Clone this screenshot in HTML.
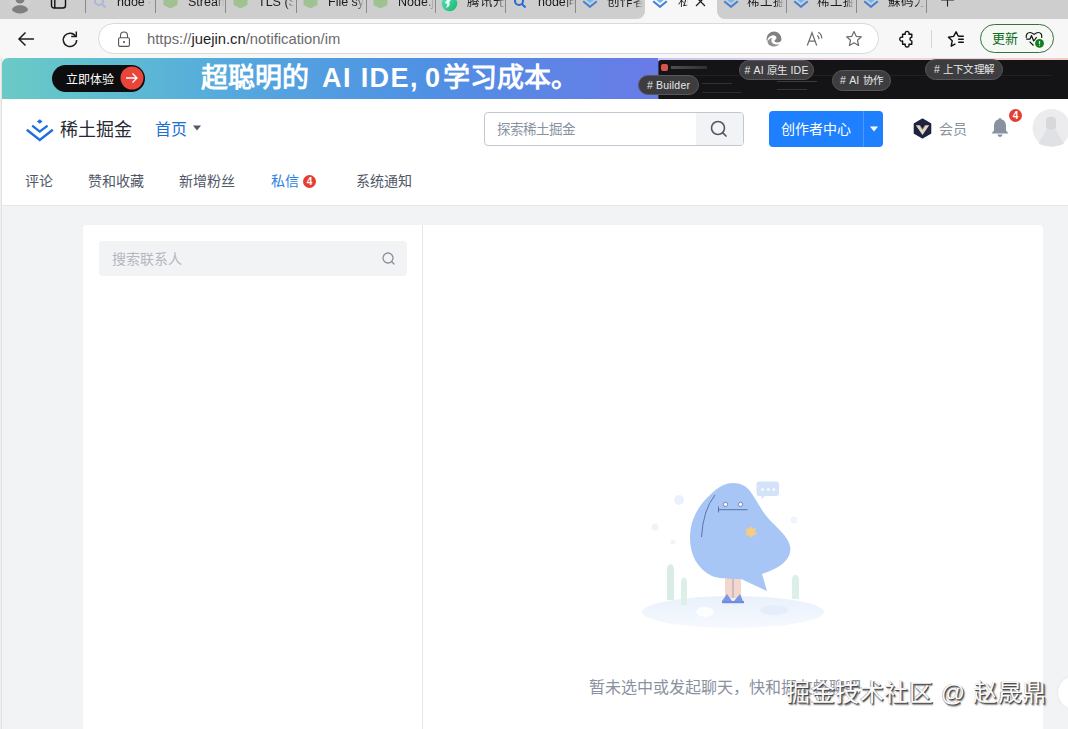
<!DOCTYPE html>
<html lang="zh-CN"><head><meta charset="utf-8">
<style>
*{box-sizing:border-box;margin:0;padding:0}
html,body{width:1068px;height:729px;overflow:hidden;background:#f2f3f5;font-family:"Liberation Sans",sans-serif}
.a{position:absolute}
#tabbar{left:0;top:0;width:1068px;height:19px;background:#f7f7f7;overflow:hidden}
.tt{position:absolute;top:-5px;font-size:12.5px;color:#1a1a1a;white-space:nowrap;overflow:hidden;line-height:14px;font-weight:500;-webkit-mask-image:linear-gradient(90deg,#000 78%,transparent 100%)}
.sep{position:absolute;top:0;width:1px;height:13px;background:#8a8a8a}
#toolbar{left:0;top:19px;width:1068px;height:39px;background:#f7f7f7}
#addr{left:98px;top:23px;width:781px;height:31px;border:1px solid #d9d9d9;border-radius:16px;background:#fff}
#banner{left:2px;top:58px;width:1066px;height:41px;border-radius:6px 0 0 0;overflow:hidden;background:linear-gradient(90deg,#6bcac5 0%,#60c0cf 8%,#55a8de 22%,#4f90e4 40%,#6a7ae7 62%)}
.bt{position:absolute;top:4px;font-size:27px;line-height:32px;color:#fff;white-space:nowrap;font-weight:bold}
.pill{position:absolute;background:#3d3d40;border:1px solid #58585c;border-radius:11px;color:#e8e8e8;font-size:10.5px;line-height:18px;text-align:center;white-space:nowrap;letter-spacing:0.2px}
#hdr{left:0;top:99px;width:1068px;height:106px;background:#fff}
.sn{position:absolute;top:173px;font-size:14px;line-height:16px;color:#515767;white-space:nowrap}
#gray{left:0;top:205px;width:1068px;height:524px;background:#f2f3f5;border-top:1px solid #e6e8eb}
#panel{left:83px;top:225px;width:960px;height:520px;background:#fff;border-radius:4px}
</style></head><body>
<div id="tabbar" class="a"><div class="a" style="left:0;top:0;width:645px;height:19px;background:#cecece;border-bottom-right-radius:8px"></div><div class="a" style="left:717px;top:0;width:351px;height:19px;background:#cecece;border-bottom-left-radius:8px"></div>
  <!-- profile -->
  <svg class="a" style="left:8px;top:-8px" width="24" height="24" viewBox="0 0 24 24"><circle cx="12" cy="8" r="11" fill="#d2d2d2"/><circle cx="12" cy="7" r="4.5" fill="#7f7f7f"/><path d="M4 18 C4.5 11.5 19.5 11.5 20 18 C17.5 22.5 6.5 22.5 4 18Z" fill="#7f7f7f"/></svg>
  <!-- tab actions -->
  <svg class="a" style="left:50px;top:-8px" width="18" height="18" viewBox="0 0 18 18"><rect x="1.5" y="1.5" width="14" height="14.5" rx="2.5" fill="none" stroke="#111" stroke-width="1.4"/><line x1="4.8" y1="2" x2="4.8" y2="16" stroke="#111" stroke-width="1.4"/></svg>
  <div class="sep" style="left:85px"></div>
  <svg class="a" style="left:93px;top:-5px" width="14" height="14" viewBox="0 0 14 14"><circle cx="6" cy="6" r="4" fill="none" stroke="#a9b8d6" stroke-width="2"/><line x1="9" y1="9" x2="12.5" y2="12.5" stroke="#a9b8d6" stroke-width="2"/></svg>
  <div class="tt" style="left:117px;width:34px">hdoe -</div>
  <div class="sep" style="left:155px"></div>
  <svg class="a hex" style="left:163px;top:-6px" width="15" height="15" viewBox="0 0 15 15"><path d="M7.5 0 L14.5 3.5 V11 L7.5 14.5 L0.5 11 V3.5Z" fill="#a0c293"/></svg>
  <div class="tt" style="left:188px;width:36px">Stream</div>
  <div class="sep" style="left:225px"></div>
  <svg class="a hex" style="left:233px;top:-6px" width="15" height="15" viewBox="0 0 15 15"><path d="M7.5 0 L14.5 3.5 V11 L7.5 14.5 L0.5 11 V3.5Z" fill="#a0c293"/></svg>
  <div class="tt" style="left:258px;width:36px">TLS (SS</div>
  <div class="sep" style="left:296px"></div>
  <svg class="a hex" style="left:303px;top:-6px" width="15" height="15" viewBox="0 0 15 15"><path d="M7.5 0 L14.5 3.5 V11 L7.5 14.5 L0.5 11 V3.5Z" fill="#a0c293"/></svg>
  <div class="tt" style="left:328px;width:36px">File sys</div>
  <div class="sep" style="left:366px"></div>
  <svg class="a hex" style="left:373px;top:-6px" width="15" height="15" viewBox="0 0 15 15"><path d="M7.5 0 L14.5 3.5 V11 L7.5 14.5 L0.5 11 V3.5Z" fill="#a0c293"/></svg>
  <div class="tt" style="left:398px;width:36px">Node.js</div>
  <div class="sep" style="left:435px"></div>
  <svg class="a" style="left:441px;top:-5px" width="17" height="17" viewBox="0 0 17 17"><defs><linearGradient id="ty" x1="0" y1="0" x2="1" y2="1"><stop offset="0" stop-color="#5de0c0"/><stop offset="1" stop-color="#14b86a"/></linearGradient></defs><circle cx="8.5" cy="8.5" r="7.8" fill="url(#ty)"/><path d="M4 8 C5 4.5 9 3 12.5 4.5 C10 4.5 8 6 8.5 8.5 C9 11 7 13 4.5 12.5 C6 11.5 6.5 10 6 9 C5.5 8.5 4.5 8.3 4 8Z" fill="#e9fff5"/></svg>
  <div class="tt" style="left:467px;width:38px">腾讯元宝</div>
  <div class="sep" style="left:505px"></div>
  <svg class="a" style="left:513px;top:-5px" width="14" height="14" viewBox="0 0 14 14"><circle cx="6" cy="6" r="4" fill="none" stroke="#2b6bd0" stroke-width="2"/><line x1="9" y1="9" x2="12.5" y2="12.5" stroke="#2b6bd0" stroke-width="2"/></svg>
  <div class="tt" style="left:538px;width:37px">node向</div>
  <div class="sep" style="left:575px"></div>
  <svg class="a jj" style="left:582px;top:-8px" width="16" height="16" viewBox="0 0 16 16"><path d="M8 1.5 L10.3 3.5 L8 5.5 L5.7 3.5Z" fill="#5aa8f0"/><path d="M4 6.5 L8 9.8 L12 6.5" fill="none" stroke="#6cb8f5" stroke-width="2"/><path d="M1.2 9.3 L8 14.8 L14.8 9.3" fill="none" stroke="#4a80d4" stroke-width="2.1"/></svg>
  <div class="tt" style="left:607px;width:36px">创作者</div>
  <!-- active tab -->
  
  <svg class="a jj" style="left:652px;top:-8px" width="16" height="16" viewBox="0 0 16 16"><path d="M8 1.5 L10.3 3.5 L8 5.5 L5.7 3.5Z" fill="#5aa8f0"/><path d="M4 6.5 L8 9.8 L12 6.5" fill="none" stroke="#6cb8f5" stroke-width="2"/><path d="M1.2 9.3 L8 14.8 L14.8 9.3" fill="none" stroke="#4a80d4" stroke-width="2.1"/></svg>
  <div class="tt" style="left:678px;width:10px">私信</div>
  <svg class="a" style="left:695px;top:-4px" width="11" height="11" viewBox="0 0 11 11"><path d="M1 1 L10 10 M10 1 L1 10" stroke="#222" stroke-width="1.3"/></svg>
  <svg class="a jj" style="left:723px;top:-8px" width="16" height="16" viewBox="0 0 16 16"><path d="M8 1.5 L10.3 3.5 L8 5.5 L5.7 3.5Z" fill="#5aa8f0"/><path d="M4 6.5 L8 9.8 L12 6.5" fill="none" stroke="#6cb8f5" stroke-width="2"/><path d="M1.2 9.3 L8 14.8 L14.8 9.3" fill="none" stroke="#4a80d4" stroke-width="2.1"/></svg>
  <div class="tt" style="left:747px;width:37px">稀土掘金</div>
  <div class="sep" style="left:786px"></div>
  <svg class="a jj" style="left:793px;top:-8px" width="16" height="16" viewBox="0 0 16 16"><path d="M8 1.5 L10.3 3.5 L8 5.5 L5.7 3.5Z" fill="#5aa8f0"/><path d="M4 6.5 L8 9.8 L12 6.5" fill="none" stroke="#6cb8f5" stroke-width="2"/><path d="M1.2 9.3 L8 14.8 L14.8 9.3" fill="none" stroke="#4a80d4" stroke-width="2.1"/></svg>
  <div class="tt" style="left:817px;width:37px">稀土掘金</div>
  <div class="sep" style="left:856px"></div>
  <svg class="a jj" style="left:863px;top:-8px" width="16" height="16" viewBox="0 0 16 16"><path d="M8 1.5 L10.3 3.5 L8 5.5 L5.7 3.5Z" fill="#5aa8f0"/><path d="M4 6.5 L8 9.8 L12 6.5" fill="none" stroke="#6cb8f5" stroke-width="2"/><path d="M1.2 9.3 L8 14.8 L14.8 9.3" fill="none" stroke="#4a80d4" stroke-width="2.1"/></svg>
  <div class="tt" style="left:888px;width:36px">蘇码力</div>
  <div class="sep" style="left:926px"></div>
  <svg class="a" style="left:941px;top:-7px" width="14" height="14" viewBox="0 0 14 14"><path d="M6.5 0 V13.5 M0 7 H13" stroke="#222" stroke-width="1.1"/></svg>
</div>
<div id="toolbar" class="a"></div>
<!-- back -->
<svg class="a" style="left:16px;top:30px" width="20" height="18" viewBox="0 0 20 18"><path d="M18 9 H3 M9.5 2.5 L3 9 L9.5 15.5" fill="none" stroke="#1f1f1f" stroke-width="1.5"/></svg>
<!-- refresh -->
<svg class="a" style="left:60px;top:29px" width="20" height="20" viewBox="0 0 20 20"><path d="M15.8 7.5 A6.7 6.7 0 1 0 16.7 11" fill="none" stroke="#1f1f1f" stroke-width="1.5"/><path d="M16.3 2.5 V7.6 H11.2" fill="none" stroke="#1f1f1f" stroke-width="1.5"/></svg>
<div id="addr" class="a"></div>
<!-- lock -->
<svg class="a" style="left:116px;top:30px" width="16" height="18" viewBox="0 0 16 18"><path d="M4.5 8 V5.5 A3.5 3.5 0 0 1 11.5 5.5 V8" fill="none" stroke="#555" stroke-width="1.1"/><rect x="2.6" y="7.8" width="10.8" height="8.6" rx="1.3" fill="none" stroke="#555" stroke-width="1.1"/><circle cx="8" cy="12" r="1" fill="#444"/></svg>
<div class="a" style="left:147px;top:31px;font-size:14.8px;line-height:17px;color:#6b6b6b;white-space:nowrap;letter-spacing:0px">https://<span style="color:#1f1f1f">juejin.cn</span>/notification/im</div>
<!-- edge logo -->
<svg class="a" style="left:766px;top:31px" width="16" height="16" viewBox="0 0 16 16"><path d="M8 0.5 A7.5 7.5 0 0 1 15.5 8 C15.5 10.5 13.5 11.5 11.5 11.5 C9.5 11.5 8.5 10.5 8.5 9.5 C8.5 8.5 10.5 8.5 10.5 7 C10.5 5 8 4 6 4.5 C3 5.3 1 8 1.5 11 C0.8 9.5 0.5 8.8 0.5 8 A7.5 7.5 0 0 1 8 0.5Z" fill="#808080"/><path d="M1.5 11 C2 14 5 15.5 8 15.5 C10.5 15.5 12.5 14.5 13.5 13 C11 14 8 13.5 6.5 12 C5 10.5 5 8 6.5 7 C4 7 2 9 1.5 11Z" fill="#909090"/></svg>
<!-- read aloud -->
<svg class="a" style="left:805px;top:30px" width="20" height="17" viewBox="0 0 20 17"><path d="M2.3 15.5 L7 2.8 L11.7 15.5 M3.9 11.2 H10.1" fill="none" stroke="#6a6a6a" stroke-width="1.2"/><path d="M12.3 5.6 C13.5 6.5 14 7.6 14 9.2" fill="none" stroke="#6a6a6a" stroke-width="1.2"/><path d="M13.3 2.2 C15.8 3.5 16.8 5.5 16.8 8.6" fill="none" stroke="#6a6a6a" stroke-width="1.2"/></svg>
<!-- star -->
<svg class="a" style="left:845px;top:30px" width="18" height="18" viewBox="0 0 18 18"><path d="M9 1.5 L11.2 6.3 L16.4 6.8 L12.5 10.3 L13.6 15.5 L9 12.8 L4.4 15.5 L5.5 10.3 L1.6 6.8 L6.8 6.3Z" fill="none" stroke="#6a6a6a" stroke-width="1.2" stroke-linejoin="round"/></svg>
<!-- puzzle -->
<svg class="a" style="left:899px;top:30px" width="17" height="18" viewBox="0 0 17 18"><path d="M3.6 4.2 H6.3 A2 2 0 1 1 9.9 4.2 H12.8 V7.3 A1.8 1.8 0 1 0 12.8 10.9 V14.2 H9.9 A2 2 0 1 1 6.3 14.2 H3.6 V10.9 A2 2 0 1 1 3.6 7.3 Z" fill="none" stroke="#111" stroke-width="1.4" stroke-linejoin="round"/></svg>
<div class="a" style="left:931px;top:30px;width:1px;height:18px;background:#d4d4d4"></div>
<!-- favorites -->
<svg class="a" style="left:946px;top:30px" width="20" height="18" viewBox="0 0 20 18"><path d="M12.2 6.1 L10.1 1.8 L7.6 6.4 L2.4 7.2 L6.2 10.8 L5.2 16.2 L9.4 13.9" fill="none" stroke="#111" stroke-width="1.4" stroke-linejoin="round"/><path d="M12.2 6.3 H17.8 M12.2 9.3 H17.8 M12.2 12.3 H17.8" stroke="#111" stroke-width="1.4"/></svg>
<!-- update pill -->
<div class="a" style="left:980px;top:24px;width:74px;height:29px;border:1px solid #3b6e41;border-radius:15px;background:#f5f9f4"></div>
<div class="a" style="left:992px;top:31px;font-size:13px;line-height:15px;color:#0e6b1e;white-space:nowrap">更新</div>
<svg class="a" style="left:1025px;top:31px" width="20" height="18" viewBox="0 0 20 18"><path d="M1.3 6.8 C0.8 3.5 2.5 1.5 5 1.5 C6.8 1.5 8 2.5 9.1 3.4 C10.2 2.5 11.4 1.5 13.2 1.5 C15.7 1.5 17.4 3.5 16.6 6.8" fill="none" stroke="#111" stroke-width="1.2"/><path d="M1.2 8.1 H5 L6.5 4.6 L8.7 10 L11.7 6.2" fill="none" stroke="#111" stroke-width="1.2" stroke-linejoin="round"/><path d="M4.6 10.6 L8.5 14.5" stroke="#111" stroke-width="1.2"/><circle cx="14.5" cy="12.4" r="4.4" fill="#137a1f"/><path d="M14.5 10 V13.2 M14.5 14.3 V15.1" stroke="#bff5c0" stroke-width="1.3"/></svg>
<div id="banner" class="a">
  <div class="a" style="left:656px;top:0;width:410px;height:3px;background:linear-gradient(90deg,#c9c4f0,#f2d6dc 60%,#f6c9c9)"></div>
  <div class="a" style="left:656px;top:2px;width:410px;height:39px;background:#141417;border-radius:3px 0 0 0;border-left:1px solid #3a3f6a"></div>
  <div class="a" style="left:659px;top:6px;width:7px;height:7px;background:#d9534f;border-radius:2px"></div>
  <div class="a" style="left:669px;top:8px;width:36px;height:3px;background:linear-gradient(90deg,#8a8a95 0,#4a4a52 100%);opacity:.5"></div>
  <div class="a" style="left:660px;top:17px;width:390px;height:1px;background:#202024"></div>
  <div class="a" style="left:775px;top:23px;width:40px;height:1px;background:#3a3a40"></div>
  <div class="a" style="left:775px;top:31px;width:30px;height:1px;background:#333338"></div>
  <div class="a" style="left:700px;top:25px;width:30px;height:1px;background:#333338"></div>
  <div class="a" style="left:700px;top:34px;width:40px;height:1px;background:#2c2c32"></div>
  <!-- CTA -->
  <div class="a" style="left:50px;top:7px;width:93px;height:27px;background:#0d0d10;border-radius:13.5px"></div>
  <div class="a" style="left:64px;top:15px;font-size:12px;line-height:14px;color:#fff;white-space:nowrap;font-weight:500">立即体验</div>
  <svg class="a" style="left:118px;top:8px" width="24" height="24" viewBox="0 0 24 24"><circle cx="12" cy="12" r="11.5" fill="#e9453a"/><path d="M6 12 H17 M12.5 7.5 L17 12 L12.5 16.5" fill="none" stroke="#fff" stroke-width="1.3"/></svg>
  <div class="bt" style="left:199px">超聪明的</div>
  <div class="bt" id="bt2" style="left:320px;letter-spacing:1.4px">AI IDE,</div>
  <div class="bt" style="left:423px"><span style="letter-spacing:3px">0</span>学习成本。</div>
  <!-- pills -->
  <div class="pill" style="left:636px;top:17px;width:61px;height:20px">#&nbsp;Builder</div>
  <div class="pill" style="left:737px;top:2px;width:75px;height:20px">#&nbsp;AI 原生 IDE</div>
  <div class="pill" style="left:830px;top:12px;width:59px;height:21px">#&nbsp;AI 协作</div>
  <div class="pill" style="left:923px;top:1px;width:78px;height:21px">#&nbsp;上下文理解</div>
</div>
<div id="hdr" class="a"></div>
<svg class="a" style="left:26px;top:118px" width="28" height="24" viewBox="0 0 28 24"><path d="M13.75 1.3 L16.6 3.5 L13.75 5.7 L10.9 3.5Z" fill="#1e6fe0"/><path d="M6.2 7.6 L13.75 13.6 L21.6 7.6" fill="none" stroke="#1e6fe0" stroke-width="2.4"/><path d="M0.8 11.8 L13.75 22 L26.8 11.8" fill="none" stroke="#1e6fe0" stroke-width="2.4"/></svg>
<div class="a" style="left:60px;top:120px;font-size:18px;line-height:21px;color:#252933;white-space:nowrap;font-weight:500">稀土掘金</div>
<div class="a" style="left:155px;top:121px;font-size:16px;line-height:18px;color:#1e6fd0;white-space:nowrap">首页</div>
<svg class="a" style="left:192px;top:125px" width="10" height="6" viewBox="0 0 10 6"><path d="M1 0.5 H9 L5 5.5Z" fill="#515767"/></svg>
<!-- search -->
<div class="a" style="left:484px;top:112px;width:260px;height:34px;border:1px solid #c2c8d1;border-radius:4px;background:#fff;overflow:hidden"><div class="a" style="right:0;top:0;width:47px;height:32px;background:#f2f3f5"></div></div>
<div class="a" style="left:497px;top:122px;font-size:13.5px;line-height:16px;color:#8a919f;white-space:nowrap">探索稀土掘金</div>
<svg class="a" style="left:709px;top:119px" width="20" height="20" viewBox="0 0 20 20"><circle cx="9" cy="9" r="6.5" fill="none" stroke="#515767" stroke-width="1.6"/><line x1="13.8" y1="13.8" x2="17" y2="17" stroke="#515767" stroke-width="1.7" stroke-linecap="round"/></svg>
<!-- creator btn -->
<div class="a" style="left:769px;top:111px;width:114px;height:36px;background:#1e80ff;border-radius:4px"></div>
<div class="a" style="left:863px;top:111px;width:1px;height:36px;background:#4d98f5"></div>
<div class="a" style="left:781px;top:121px;font-size:14px;line-height:16px;color:#fff;white-space:nowrap">创作者中心</div>
<svg class="a" style="left:869px;top:126px" width="10" height="6" viewBox="0 0 10 6"><path d="M1 0.5 H9 L5 5.5Z" fill="#fff"/></svg>
<!-- vip -->
<svg class="a" style="left:912px;top:118px" width="21" height="21" viewBox="0 0 21 21"><path d="M10.5 1.2 L18.6 5.8 V15.2 L10.5 19.8 L2.4 15.2 V5.8Z" fill="#1e2340" stroke="#1e2340" stroke-width="1.4" stroke-linejoin="round"/><path d="M3.8 7.2 L10.5 17 L17.2 7.2 H13.6 L10.5 11.8 L7.4 7.2Z" fill="#e3d8c2"/><path d="M7.6 7.2 L10.5 11.6 L13.4 7.2" fill="none" stroke="#b8a98c" stroke-width="0.8"/></svg>
<div class="a" style="left:939px;top:121px;font-size:14px;line-height:16px;color:#8a919f;white-space:nowrap">会员</div>
<!-- bell -->
<svg class="a" style="left:990px;top:117px" width="20" height="21" viewBox="0 0 20 21"><path d="M10 1 C10.8 1 11.3 1.6 11.3 2.3 C14.3 3 16 5.5 16 8.8 V13.5 L18.5 16.5 H1.5 L4 13.5 V8.8 C4 5.5 5.7 3 8.7 2.3 C8.7 1.6 9.2 1 10 1Z" fill="#8a919f"/><path d="M7.5 17.5 H12.5 C12.5 19 11.3 20 10 20 C8.7 20 7.5 19 7.5 17.5Z" fill="#8a919f"/></svg>
<div class="a" style="left:1009px;top:109px;width:13px;height:13px;border-radius:50%;background:#e33e33;color:#fff;font-size:10px;font-weight:bold;line-height:13px;text-align:center;border:0">4</div>
<!-- avatar -->
<svg class="a" style="left:1032px;top:109px" width="38" height="38" viewBox="0 0 38 38"><circle cx="19.5" cy="19" r="19" fill="#ececef"/><path d="M14 12 C14 8.5 16 7.8 19 7.8 C22 7.8 24 8.5 24 12 V18 C24 20 22 21 19 21 C16 21 14 20 14 18Z" fill="#d6d8dc"/><path d="M14.5 20.5 L6.5 34.5 C12 38 27 38 32 34.5 L23.5 20.5 C22 22 16 22 14.5 20.5Z" fill="#dfe1e4"/></svg>
<!-- subnav -->
<div class="sn" style="left:25px">评论</div>
<div class="sn" style="left:88px">赞和收藏</div>
<div class="sn" style="left:179px">新增粉丝</div>
<div class="sn" style="left:271px;color:#2a7fe2">私信</div>
<div class="a" style="left:303px;top:175px;width:13px;height:13px;border-radius:50%;background:#e33e33;color:#fff;font-size:10px;font-weight:bold;line-height:13px;text-align:center">4</div>
<div class="sn" style="left:356px">系统通知</div>
<div id="gray" class="a"></div>
<div id="panel" class="a"></div>
<div class="a" style="left:422px;top:225px;width:1px;height:504px;background:#e4e6eb"></div>
<div class="a" style="left:99px;top:241px;width:308px;height:35px;background:#f2f3f5;border-radius:4px"></div>
<div class="a" style="left:112px;top:251px;font-size:14px;line-height:16px;color:#b3b7bf;white-space:nowrap">搜索联系人</div>
<svg class="a" style="left:381px;top:251px" width="15" height="15" viewBox="0 0 15 15"><circle cx="7" cy="7" r="5" fill="none" stroke="#8a919f" stroke-width="1.3"/><line x1="10.6" y1="10.6" x2="13" y2="13" stroke="#8a919f" stroke-width="1.4" stroke-linecap="round"/></svg>
<!-- illustration -->
<svg class="a" style="left:630px;top:470px" width="210" height="170" viewBox="0 0 210 170">
  <defs><linearGradient id="gg" x1="0" y1="0" x2="0" y2="1"><stop offset="0" stop-color="#e9f1fc"/><stop offset="1" stop-color="#f6f9fe"/></linearGradient></defs><ellipse cx="103" cy="142" rx="91" ry="16" fill="url(#gg)"/>
  <ellipse cx="75" cy="142" rx="9" ry="5" fill="#fbfdff"/>
  <ellipse cx="144" cy="140" rx="14" ry="5" fill="#e4edfa"/>
  <circle cx="49" cy="30" r="5" fill="#eaf1fb"/>
  <circle cx="25" cy="57" r="3.5" fill="#eef4fb"/>
  <circle cx="43" cy="72" r="2.5" fill="#eef4fb"/>
  <circle cx="164" cy="50" r="3.5" fill="#eef4fb"/>
  <path d="M37 130 V100 C37 92 44 92 44 100 V130Z" fill="#d9ede6"/>
  <path d="M51 135 V112 C51 106 57 106 57 112 V135Z" fill="#dcefe8"/>
  <path d="M162 129 V110 C162 103 169 103 169 110 V129Z" fill="#dcefe8"/>
  <path d="M95 104 H111 V128 H95Z" fill="#f5d6cc"/>
  <line x1="103" y1="106" x2="103" y2="128" stroke="#6d7ab8" stroke-width="0.6"/>
  <path d="M92 131 L97 124 L102 131Z M104 131 L110 124 L113 131Z" fill="#7a96e6"/>
  <rect x="92" y="131" width="22" height="2.2" fill="#6f8ce0"/>
  <path d="M103 13 C111 13 116 16 120 21 C126 29 131 40 138 48 C146 57 158 66 160 76 C162 86 155 95 140 101 L132 104 L137 121 C128 117 118 112 111 109 C100 109 90 109 82 106 C67 99 60 84 60 68 C60 50 68 36 80 25 C88 17 95 13 103 13Z" fill="#a8c6f5"/>
  <path d="M85 25 Q73 40 71.5 67" fill="none" stroke="#3f4f87" stroke-width="0.7"/>
  <path d="M88.5 36.5 V42.5 M88.5 39.7 H117.7" fill="none" stroke="#3f4f87" stroke-width="0.7"/>
  <circle cx="95.5" cy="34.4" r="2.1" fill="#fff" stroke="#3f4f87" stroke-width="0.6"/>
  <circle cx="110.5" cy="34.4" r="2.1" fill="#fff" stroke="#3f4f87" stroke-width="0.6"/>
  <path d="M120.5 56 L122.5 58.5 L126 58.3 L125 61.5 L127 64.5 L123.5 65 L121.5 68 L119.2 65.5 L115.5 65.5 L117 62 L115.2 59 L118.8 58.6Z" fill="#f6cb86"/>
  <path d="M129 11.5 H146.5 C148 11.5 149 12.5 149 14 V23.5 C149 25 148 26 146.5 26 H135 L131.5 29 V26 H129 C127.5 26 126.5 25 126.5 23.5 V14 C126.5 12.5 127.5 11.5 129 11.5Z" fill="#d5e3f8"/>
  <circle cx="132.6" cy="19.5" r="1.3" fill="#fff"/><circle cx="138.3" cy="19.5" r="1.3" fill="#fff"/><circle cx="143.9" cy="19.5" r="1.3" fill="#fff"/>
</svg>
<div class="a" style="left:589px;top:679px;font-size:16px;line-height:18px;color:#8a919f;white-space:nowrap">暂未选中或发起聊天，快和掘友畅聊吧</div>
<!-- watermark -->
<div class="a" style="left:786px;top:679px;font-size:24px;line-height:28px;color:#fafafa;white-space:nowrap;letter-spacing:0.6px;text-shadow:1px 1px 0 #4a4a4a,1.5px 1.5px 1.5px #777,-0.5px -0.5px 0.5px #aaa">掘金技术社区 @ 赵晟鼎</div>
<div class="a" style="left:1058px;top:676px;width:34px;height:33px;border-radius:50%;background:#fff;box-shadow:0 0 3px rgba(0,0,0,.08)"></div>
<div class="a" style="left:0;top:58px;width:1px;height:671px;background:#f0f0f0"></div>
<div class="a" style="left:1px;top:58px;width:1px;height:671px;background:#e0e0e0"></div>
</body></html>
